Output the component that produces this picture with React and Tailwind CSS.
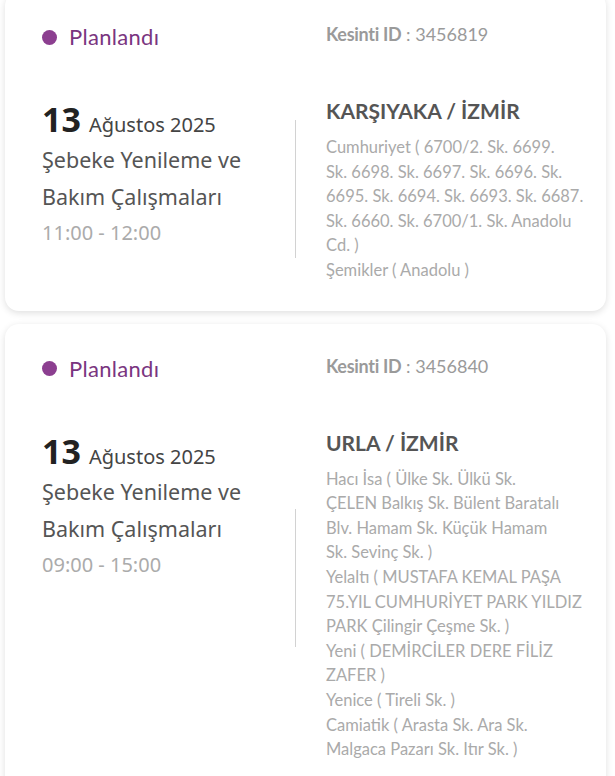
import React from "react";

const cards = [
  {
    id: "3456819",
    date: "13",
    month: "Ağustos 2025",
    time: "11:00 - 12:00",
    place: "KARŞIYAKA / İZMİR",
    divider: "mt-[24px]",
    lines: [
      ["Cumhuriyet ( 6700/2. Sk. 6699.", "Sk. 6698. Sk. 6697. Sk. 6696. Sk.", "6695. Sk. 6694. Sk. 6693. Sk. 6687.", "Sk. 6660. Sk. 6700/1. Sk. Anadolu", "Cd. )"],
      ["Şemikler ( Anadolu )"],
    ],
  },
  {
    id: "3456840",
    date: "13",
    month: "Ağustos 2025",
    time: "09:00 - 15:00",
    place: "URLA / İZMİR",
    divider: "mt-[81px]",
    lines: [
      ["Hacı İsa ( Ülke Sk. Ülkü Sk.", "ÇELEN Balkış Sk. Bülent Baratalı", "Blv. Hamam Sk. Küçük Hamam", "Sk. Sevinç Sk. )"],
      ["Yelaltı ( MUSTAFA KEMAL PAŞA", "75.YIL CUMHURİYET PARK YILDIZ", "PARK Çilingir Çeşme Sk. )"],
      ["Yeni ( DEMİRCİLER DERE FİLİZ", "ZAFER )"],
      ["Yenice ( Tireli Sk. )"],
      ["Camiatik ( Arasta Sk. Ara Sk.", "Malgaca Pazarı Sk. Itır Sk. )"],
    ],
  },
];

function Card({ c }) {
  return (
    <div className="rounded-[14px] bg-white shadow-[0_2px_7px_rgba(0,0,0,0.13)] pl-[37px] pr-[30px] pt-[31px] pb-[28px]">
      <div className="flex items-start font-['Lato',sans-serif]">
        <div className="w-[284px] shrink-0 flex items-center gap-[12px] h-[28px]">
          <span className="w-[15px] h-[15px] rounded-full bg-[#8c3f90]" />
          <span className="text-[22px] leading-[28px] tracking-[0.3px] text-[#7a3580]">Planlandı</span>
        </div>
        <div className="text-[18px] leading-[22px] text-[#9a9a9a]">
          <span className="font-bold tracking-[-0.3px]">Kesinti ID</span>
          <span> : {c.id}</span>
        </div>
      </div>
      <div className="flex items-start mt-[45px]">
        <div className="w-[253px] shrink-0 font-['Noto_Sans',sans-serif]">
          <div className="h-[45px] leading-[40px] pt-[3px] text-[#444]">
            <span className="text-[34px] font-bold text-[#222]">{c.date}</span>
            <span className="text-[20px] ml-[8px]">{c.month}</span>
          </div>
          <div className="text-[21.5px] leading-[37px] text-[#555]">
            Şebeke Yenileme ve
            <br />
            Bakım Çalışmaları
          </div>
          <div className="text-[20px] leading-[28px] mt-[4px] text-[#ababab]">{c.time}</div>
        </div>
        <div className={"w-px shrink-0 h-[138px] bg-[#d2d2d2] " + c.divider} />
        <div className="flex-1 pl-[30px] font-['Lato',sans-serif]">
          <div className="text-[21px] leading-[30px] font-bold text-[#555] mb-[9px]">{c.place}</div>
          <div className="text-[16.5px] leading-[24.6px] text-[#aaaaaa] whitespace-nowrap">
            {c.lines.map((g, i) => (
              <div key={i}>
                {g.map((l, j) => (
                  <div key={j}>{l}</div>
                ))}
              </div>
            ))}
          </div>
        </div>
      </div>
    </div>
  );
}

export default function App() {
  return (
    <div className="bg-white min-h-screen overflow-hidden">
      <div className="pl-[5px] mt-[-8px] flex flex-col gap-[13px] w-[606px]">
        {cards.map((c) => (
          <Card key={c.id} c={c} />
        ))}
      </div>
    </div>
  );
}
